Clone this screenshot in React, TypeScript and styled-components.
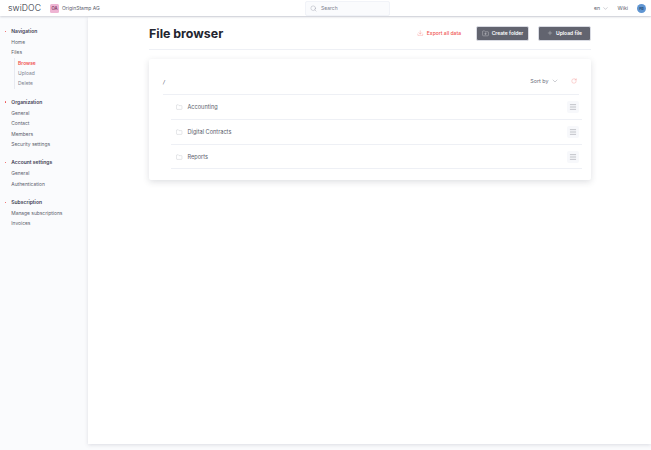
import React from "react";
import styled, { createGlobalStyle } from "styled-components";
import { ChevronDown, Download, FolderPlus, Folder, Menu, Plus, RotateCw, Search } from "lucide-react";

const Global = createGlobalStyle`
  html, body { margin: 0; padding: 0; height: 100%; background: #fafbfd; overflow: hidden; }
  body { font-family: Inter, "Liberation Sans", sans-serif; color: #3f4254; }
  #root { height: 100%; }
`;

const Page = styled.div`
  width: 651px; height: 450px; display: flex; flex-direction: column;
`;
const Header = styled.header`
  height: 16px; background: #fff; box-shadow: 0 1px 2px rgba(60,65,85,.22);
  display: flex; align-items: center; position: relative; z-index: 2; flex: none;
  padding: 0 5px 0 8px;
`;
const Logo = styled.div`
  font-size: 8.6px; letter-spacing: .1px; color: #2a2c38; width: 42px; font-weight: 300;
`;
const Org = styled.div`
  display: flex; align-items: center; gap: 3px; width: 255px; font-size: 5px; color: #5b5e6c;
`;
const OrgBadge = styled.span`
  width: 9px; height: 9px; border-radius: 1.5px; background: #eeb4d3; color: #7c3a5e;
  display: flex; align-items: center; justify-content: center; font-size: 4.2px; font-weight: 600;
`;
const SearchBox = styled.div`
  width: 85px; height: 15px; background: #fafbfd; border: 1px solid #f1f3f8; border-radius: 2px;
  box-sizing: border-box; display: flex; align-items: center; gap: 4px; padding-left: 4px;
  font-size: 5px; color: #7c7f8d;
`;
const HeaderRight = styled.div`
  margin-left: auto; display: flex; align-items: center; font-size: 5.2px; color: #5b5e6c;
`;
const Lang = styled.span`
  display: flex; align-items: center; gap: 1.5px; margin-right: 9px;
`;
const Wiki = styled.span`
  margin-right: 9px;
`;
const Avatar = styled.span`
  width: 9px; height: 9px; border-radius: 50%; background: #5f95d2; color: #23466e;
  font-size: 3.8px; font-weight: 600; display: flex; align-items: center; justify-content: center;
`;
const Body = styled.div`
  flex: 1; display: flex; min-height: 0; padding-bottom: 6px;
`;
const Sidebar = styled.nav`
  width: 88px; flex: none; padding-top: 10px; box-sizing: border-box;
`;
const Section = styled.div`
  margin-bottom: 8px;
`;
const SectionTitle = styled.div`
  height: 10.4px; line-height: 10.4px; font-size: 5px; font-weight: 600; color: #3f4254;
  padding-left: 11.3px; position: relative; margin-bottom: .5px;
  &::before {
    content: ""; position: absolute; left: 5px; top: 4.6px; width: 1.2px; height: 1.2px;
    border-radius: 50%; background: #ee4b4b;
  }
`;
const Item = styled.div<{ $sub?: boolean; $active?: boolean }>`
  height: 10.4px; line-height: 10.4px; font-size: 4.9px;
  padding-left: ${(p) => (p.$sub ? "2.8px" : "11.3px")};
  color: ${(p) => (p.$active ? "#f0524f" : p.$sub ? "#7c7f8d" : "#5b5e6c")};
  font-weight: ${(p) => (p.$active ? 600 : 400)};
`;
const SubList = styled.div`
  margin-left: 14.3px; border-left: 1px solid #e8eaf1;
`;
const Main = styled.main`
  flex: 1; background: #fff; box-shadow: 0 1px 4px rgba(60,65,85,.16);
  padding: 0 60px 0 61px; min-width: 0; margin-top: 1px;
`;
const TitleRow = styled.div`
  height: 32px; display: flex; align-items: center; border-bottom: 1px solid #eef0f5;
`;
const Title = styled.h1`
  font-size: 12.4px; font-weight: 700; color: #23252f; margin: 0 auto 0 0; letter-spacing: 0;
`;
const ExportLink = styled.span`
  display: flex; align-items: center; gap: 3px; font-size: 5px; font-weight: 500; color: #f0524f;
  margin: 0 15px 0 0;
`;
const ActionButton = styled.button<{ $wide?: boolean }>`
  width: 53px; height: 15px; border: 1px solid #d9dbe3; border-radius: 2px; background: #62646f;
  color: #fff; font: 600 5px Inter, sans-serif; display: flex; align-items: center; justify-content: center;
  gap: 3px; padding: 0; margin-left: ${(p) => (p.$wide ? "9px" : "0")};
`;
const Card = styled.section`
  margin-top: 9px; background: #fff; border-radius: 2px; box-shadow: 0 2px 6px rgba(60,65,85,.17);
  padding: 9px 12px 11px 14px;
`;
const CardTop = styled.div`
  height: 26px; display: flex; align-items: center; border-bottom: 1px solid #eef0f5;
  font-size: 5.2px; color: #3f4254; padding-right: 2.5px;
`;
const Crumb = styled.span`
  margin-right: auto; font-style: italic; margin-top: 1px;
`;
const SortBy = styled.span`
  display: flex; align-items: center; gap: 2px; color: #6b6e7c; font-size: 5.4px; margin-right: 12px;
`;
const RowList = styled.div`
  margin: 0 -3px 0 8px;
`;
const Row = styled.div`
  height: 24.8px; display: flex; align-items: center; border-bottom: 1px solid #eef0f5;
  padding: 1px 3px 0 5px; box-sizing: border-box; font-size: 5.6px; color: #5b5e6c; gap: 5px;
`;
const RowName = styled.span`
  flex: 1;
`;
const MenuButton = styled.span`
  width: 12px; height: 12px; background: #f7f8fb; border-radius: 2px; display: flex;
  align-items: center; justify-content: center; color: #62646f;
`;

const nav = ["General", "Contact", "Members", "Security settings"];

export default function App() {
  return (
    <Page>
      <Global />
      <Header>
        <Logo>swiDOC</Logo>
        <Org><OrgBadge>OA</OrgBadge>OriginStamp AG</Org>
        <SearchBox><Search size={7} strokeWidth={1} color="#77798a" />Search</SearchBox>
        <HeaderRight>
          <Lang>en <ChevronDown size={7} strokeWidth={1} /></Lang>
          <Wiki>Wiki</Wiki>
          <Avatar>FB</Avatar>
        </HeaderRight>
      </Header>
      <Body>
        <Sidebar>
          <Section>
            <SectionTitle>Navigation</SectionTitle>
            <Item>Home</Item>
            <Item>Files</Item>
            <SubList>
              <Item $sub $active>Browse</Item>
              <Item $sub>Upload</Item>
              <Item $sub>Delete</Item>
            </SubList>
          </Section>
          <Section>
            <SectionTitle>Organization</SectionTitle>
            {nav.map((n) => <Item key={n}>{n}</Item>)}
          </Section>
          <Section>
            <SectionTitle>Account settings</SectionTitle>
            <Item>General</Item>
            <Item>Authentication</Item>
          </Section>
          <Section>
            <SectionTitle>Subscription</SectionTitle>
            <Item>Manage subscriptions</Item>
            <Item>Invoices</Item>
          </Section>
        </Sidebar>
        <Main>
          <TitleRow>
            <Title>File browser</Title>
            <ExportLink><Download size={6.5} strokeWidth={1} />Export all data</ExportLink>
            <ActionButton><FolderPlus size={7} strokeWidth={1} />Create folder</ActionButton>
            <ActionButton $wide><Plus size={6} strokeWidth={1.2} />Upload file</ActionButton>
          </TitleRow>
          <Card>
            <CardTop>
              <Crumb>/</Crumb>
              <SortBy>Sort by <ChevronDown size={8} strokeWidth={1} /></SortBy>
              <RotateCw size={6} strokeWidth={1.2} color="#f0706c" />
            </CardTop>
            <RowList>
              {["Accounting", "Digital Contracts", "Reports"].map((r) => (
                <Row key={r}>
                  <Folder size={6.5} strokeWidth={.8} color="#8a8c99" />
                  <RowName>{r}</RowName>
                  <MenuButton><Menu size={8} strokeWidth={1.1} /></MenuButton>
                </Row>
              ))}
            </RowList>
          </Card>
        </Main>
      </Body>
    </Page>
  );
}
